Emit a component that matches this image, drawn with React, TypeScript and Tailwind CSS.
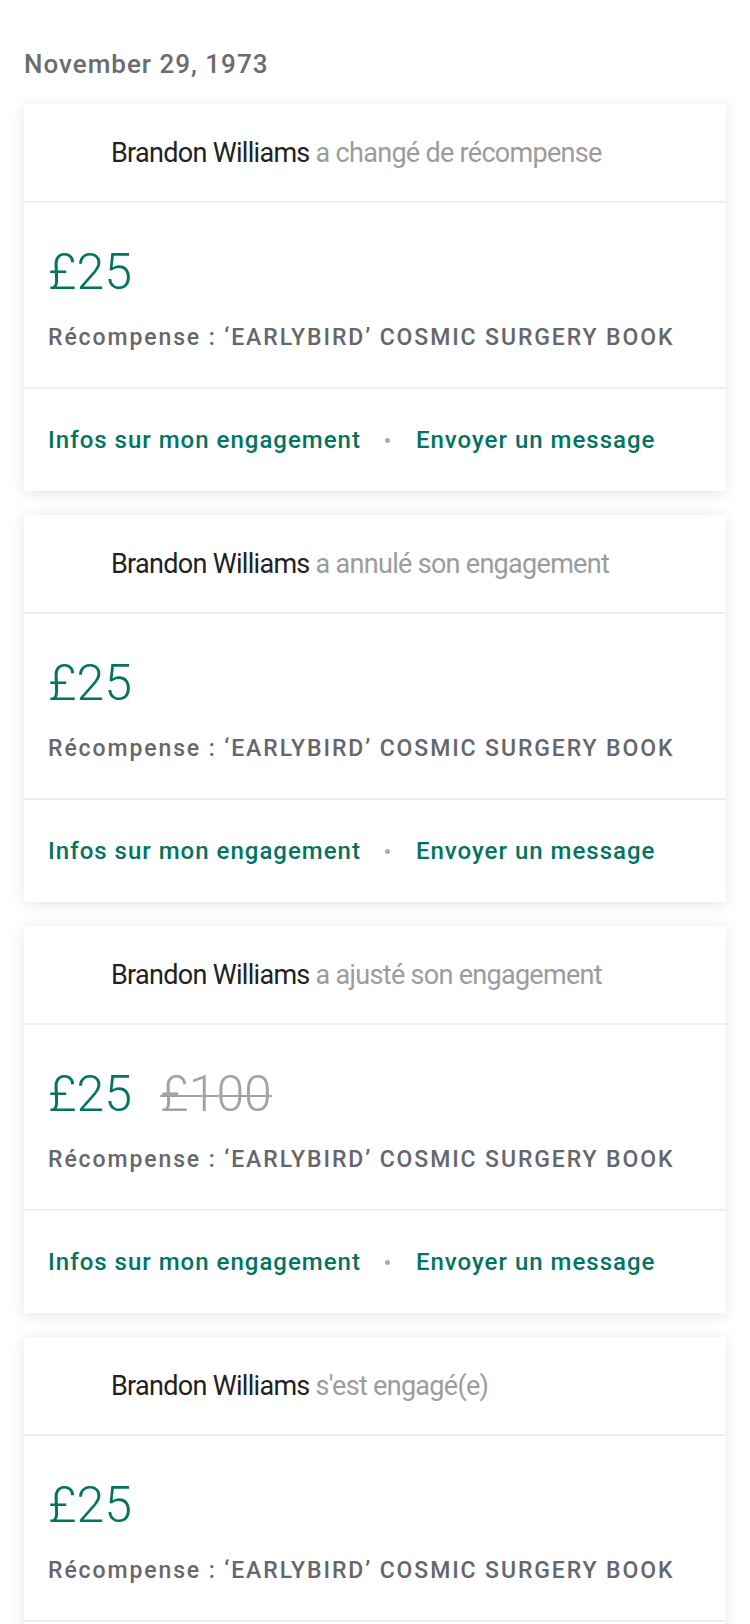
const activities = [
  { action: 'a changé de récompense', amount: '£25', previous: null as string | null },
  { action: 'a annulé son engagement', amount: '£25', previous: null },
  { action: 'a ajusté son engagement', amount: '£25', previous: '£100' },
  { action: "s'est engagé(e)", amount: '£25', previous: null },
];

function ActivityCard({ action, amount, previous }: { action: string; amount: string; previous: string | null }) {
  return (
    <div className="bg-white shadow-[0_2px_14px_rgba(0,0,0,0.11)]">
      {/* Header */}
      <div className="h-[99px] flex items-center pl-[87px] border-b-2 border-[#efeff3]">
        <p className="text-[27px] leading-[32px] tracking-[-0.7px]">
          <span className="text-[#222222]">Brandon Williams</span>{' '}
          <span className="text-[#9c9c9c]">{action}</span>
        </p>
      </div>

      {/* Amount + reward */}
      <div className="px-6 pt-[41px] pb-[35px] border-b-2 border-[#efeff3]">
        <div className="flex items-center text-[50px] leading-[56px] font-light">
          <span className="text-[#037362]">{amount}</span>
          {previous && (
            <span className="ml-[28px] text-[#a3a3a3] line-through decoration-2">{previous}</span>
          )}
        </div>
        <p className="mt-6 text-[23px] leading-[28px] font-medium tracking-[1.9px] text-[#66666c]">
          Récompense : ‘EARLYBIRD’ COSMIC SURGERY BOOK
        </p>
      </div>

      {/* Links */}
      <div className="px-6 h-[102px] flex items-center text-[24px] leading-[28px] font-medium tracking-[1px] text-[#037362]">
        <span>Infos sur mon engagement</span>
        <span className="ml-[24px] mr-[26px] w-[5px] h-[5px] rounded-full bg-[#ababab]" />
        <span>Envoyer un message</span>
      </div>
    </div>
  );
}

export default function App() {
  return (
    <div className="min-h-screen bg-white px-6 pt-12 pb-10 font-['Roboto',sans-serif]">
      <h2 className="text-[26px] leading-[32px] font-medium tracking-[1px] text-[#6b6b70]">November 29, 1973</h2>
      <div className="mt-6 flex flex-col gap-6">
        {activities.map((a, i) => (
          <ActivityCard key={i} action={a.action} amount={a.amount} previous={a.previous} />
        ))}
      </div>
    </div>
  );
}
